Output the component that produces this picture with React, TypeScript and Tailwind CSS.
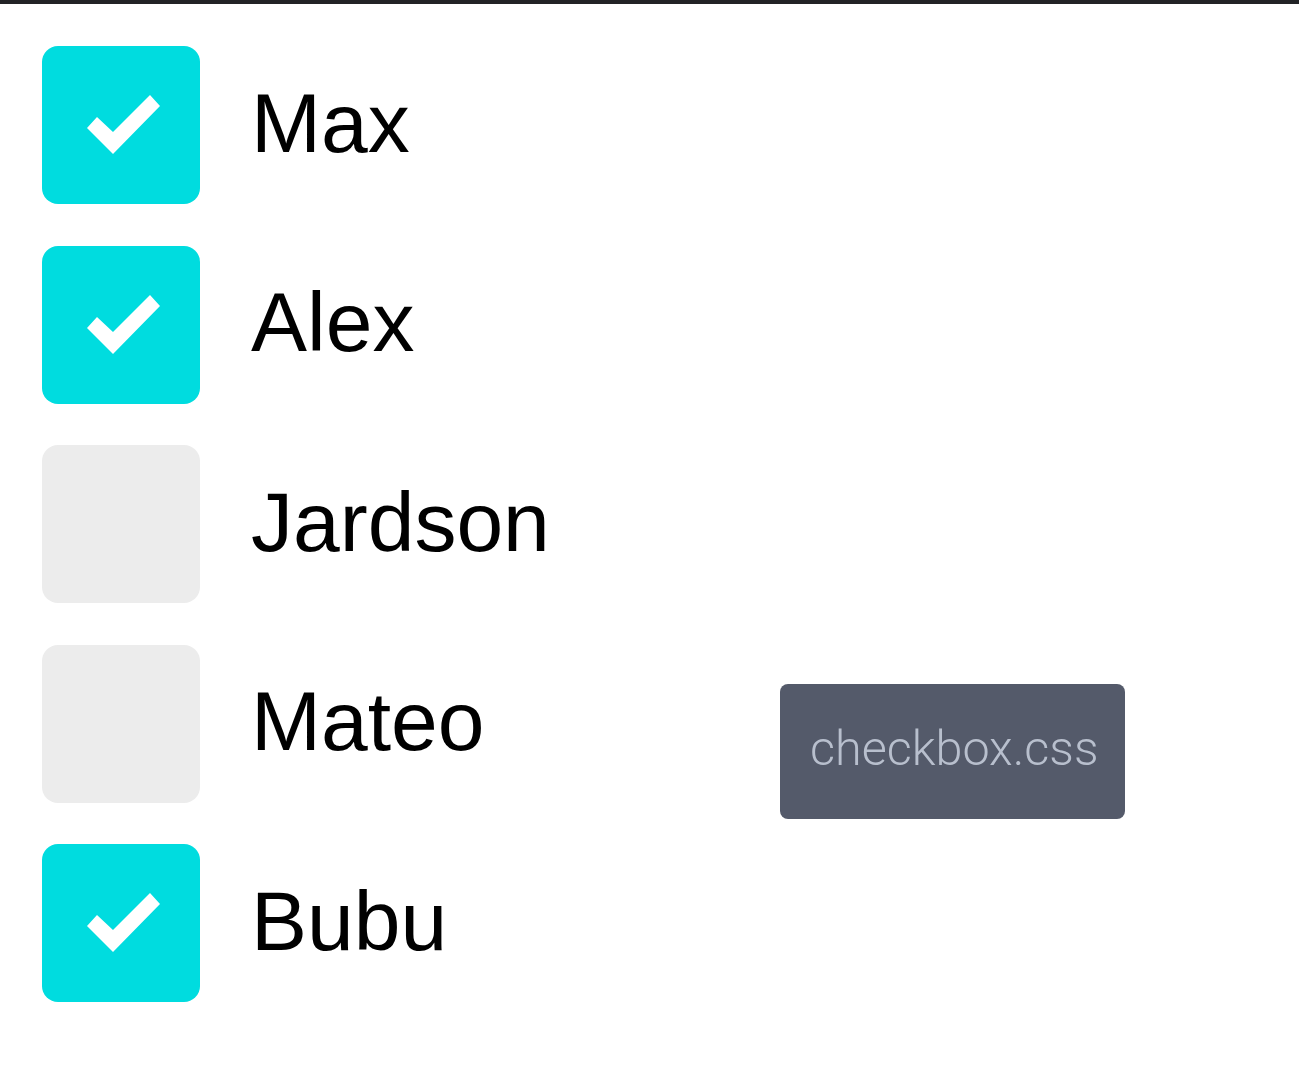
const people = [
  { name: "Max", checked: true },
  { name: "Alex", checked: true },
  { name: "Jardson", checked: false },
  { name: "Mateo", checked: false },
  { name: "Bubu", checked: true },
];

function Checkbox({ checked }: { checked: boolean }) {
  return (
    <div
      className={
        "flex h-[158px] w-[158px] shrink-0 items-center justify-center rounded-[16px] " +
        (checked ? "bg-[#00dcdf]" : "bg-[#ececec]")
      }
    >
      {checked && (
        <svg width="158" height="158" viewBox="0 0 158 158">
          <polygon
            points="45,82 55,71 71,86 108,49 118,60 71,108"
            fill="#ffffff"
          />
        </svg>
      )}
    </div>
  );
}

export default function App() {
  return (
    <main className="relative min-h-[1065px] w-full border-t-[4px] border-[#222326] bg-white">
      <div className="flex flex-col gap-[41.5px] pl-[42px] pt-[42px]">
        {people.map((p) => (
          <label key={p.name} className="flex items-center gap-[51px]">
            <Checkbox checked={p.checked} />
            <span className="pb-[5px] font-['Liberation_Sans',Arial,sans-serif] text-[84px] leading-none text-black">
              {p.name}
            </span>
          </label>
        ))}
      </div>
      <div className="absolute left-[780px] top-[680px] flex h-[135px] w-[345px] items-center rounded-[8px] bg-[#545a6a] pl-[30px]">
        <span className="pb-[5px] font-['Roboto',sans-serif] text-[48.5px] font-light leading-none text-[#b8bfcd]">
          checkbox.css
        </span>
      </div>
    </main>
  );
}
